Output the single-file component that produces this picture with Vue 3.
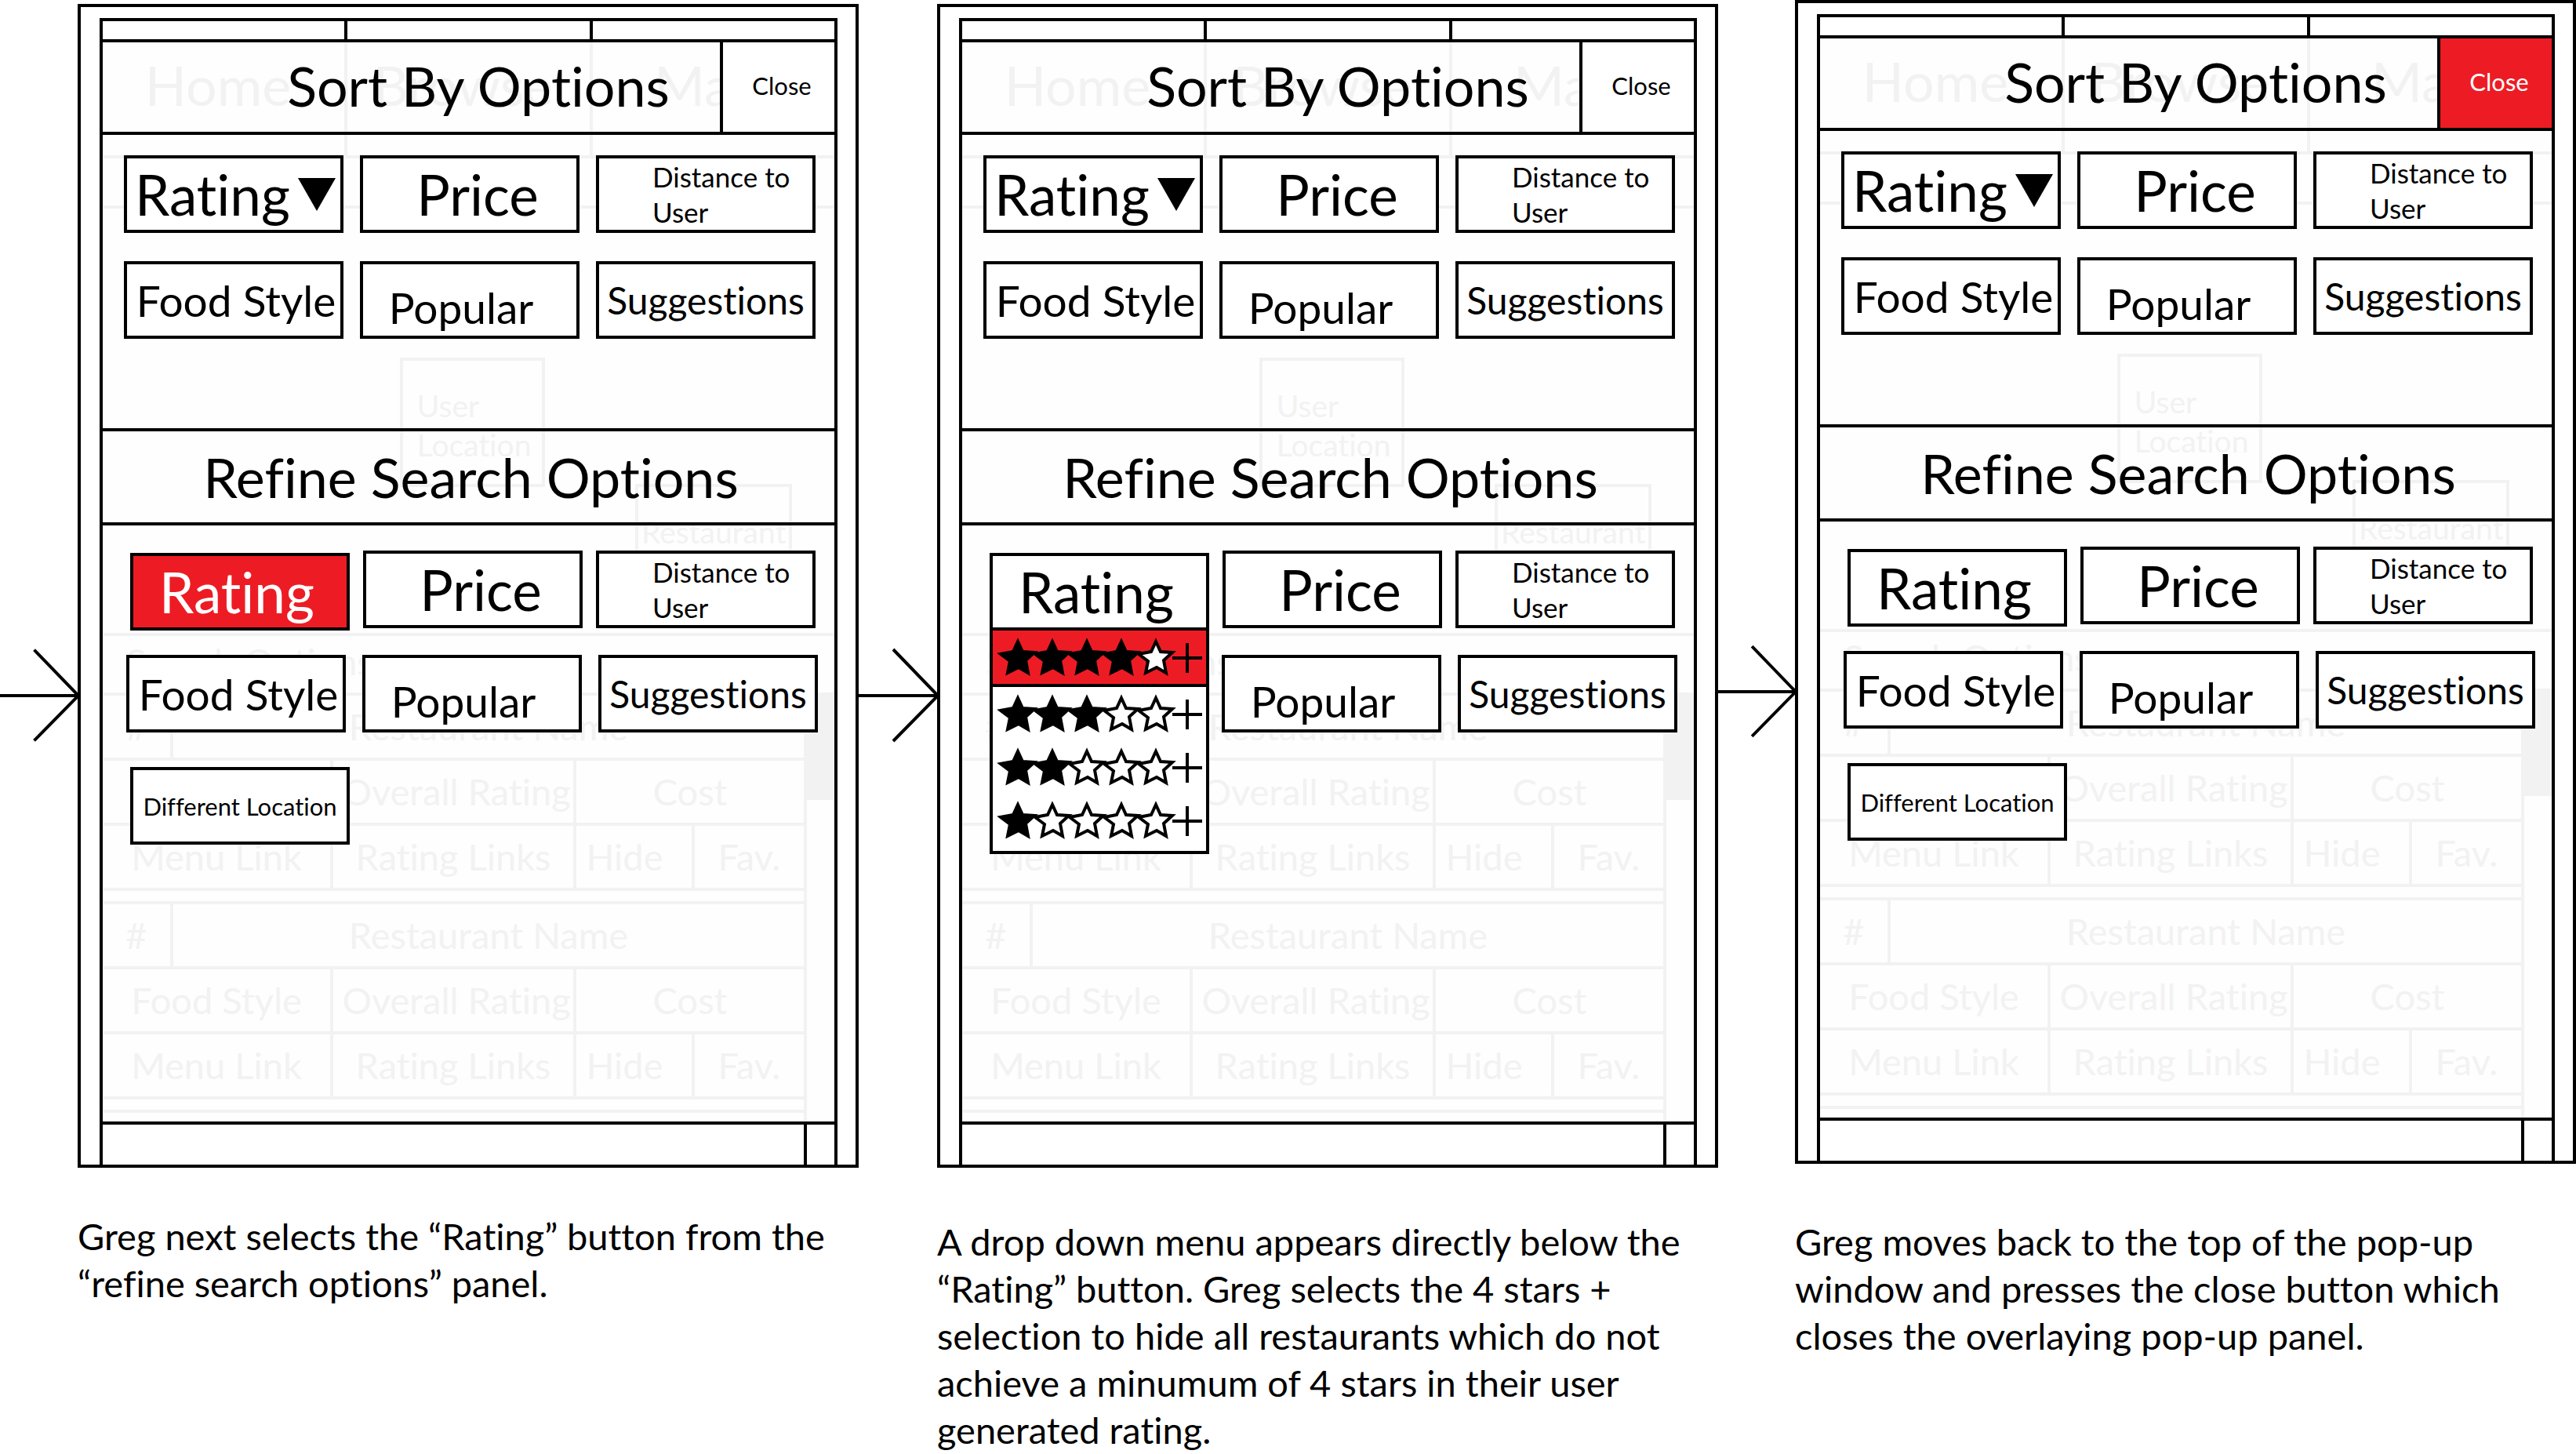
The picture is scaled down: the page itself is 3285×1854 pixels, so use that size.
<script setup>
const steps = [
  {
    id: 'select',
    caption: 'Greg next selects the “Rating” button from the “refine search options” panel.',
    active: 'rating',
  },
  {
    id: 'choose',
    caption:
      'A drop down menu appears directly below the “Rating” button. Greg selects the 4 stars + selection to hide all restaurants which do not achieve a minumum of 4 stars in their user generated rating.',
    active: 'four-stars',
    menuOpen: true,
  },
  {
    id: 'close',
    caption:
      'Greg moves back to the top of the pop-up window and presses the close button which closes the overlaying pop-up panel.',
    active: 'close',
  },
]

const starRows = [4, 3, 2, 1]
const starShape = '0,-21 6,-8 21,-7 10,3 13,19 1,12 -13,19 -10,4 -22,-5 -6,-8'
</script>

<template>
  <main class="storyboard">
    <article v-for="step in steps" :key="step.id" class="step" :class="step.id">
      <svg class="arrow" viewBox="0 0 100 120" preserveAspectRatio="xMaxYMid meet" aria-hidden="true">
        <path d="M0 60H101M44 1L101 60L44 118" />
      </svg>

      <section class="frame">
        <div class="window">
          <div class="tab-tops"><span></span><span></span><span></span></div>

          <div class="stage">
            <div class="screen">
              <nav class="tabs">
                <span>Home</span>
                <span>Browse</span>
                <span>Map</span>
              </nav>
              <div class="band"></div>
              <div class="map">
                <div class="pin user">User<br />Location</div>
                <div class="pin place">Restaurant</div>
              </div>
              <div class="search-bar">Search Options</div>
              <div class="results">
                <div class="list">
                  <div v-for="n in 2" :key="n" class="card">
                    <div class="line name"><span>#</span><span>Restaurant Name</span></div>
                    <div class="line facts">
                      <span>Food Style</span><span>Overall Rating</span><span>Cost</span>
                    </div>
                    <div class="line links">
                      <span>Menu Link</span><span>Rating Links</span><span class="hide">Hide</span><span>Fav.</span>
                    </div>
                  </div>
                  <div class="next-card"></div>
                </div>
                <div class="scrollbar"><div class="thumb"></div></div>
              </div>
            </div>

            <div class="popup">
              <header class="sort-head">
                <h2>Sort By Options</h2>
                <button class="close" :class="{ active: step.active === 'close' }">Close</button>
              </header>
              <div class="sort-body">
                <div class="row sort-row">
                  <button class="option large sorted">
                    Rating
                    <svg viewBox="0 0 48 42" width="48" height="42" aria-hidden="true">
                      <path d="M0 0H48L24 42Z" />
                    </svg>
                  </button>
                  <button class="option large price">Price</button>
                  <button class="option small distance">Distance to<br />User</button>
                </div>
                <div class="row sort-row">
                  <button class="option medium food">Food Style</button>
                  <button class="option medium popular">Popular</button>
                  <button class="option regular">Suggestions</button>
                </div>
              </div>

              <header class="refine-head"><h2>Refine Search Options</h2></header>
              <div class="refine-body">
                <div class="row refine-row first">
                  <div class="rating-field">
                    <button class="option large rating" :class="{ active: step.active === 'rating' }">Rating</button>
                    <ul v-if="step.menuOpen" class="menu">
                      <li v-for="count in starRows" :key="count">
                        <button
                          class="stars"
                          :class="{ chosen: count === 4 }"
                          :aria-label="`${count} stars or more`"
                        >
                          <svg viewBox="0 0 272 68" aria-hidden="true">
                            <polygon
                              v-for="i in 5"
                              :key="i"
                              :points="starShape"
                              :transform="`translate(${44 * i - 12} 35)`"
                              :class="{ filled: i <= count }"
                            />
                            <path d="M229 35H267M248 16V54" />
                          </svg>
                        </button>
                      </li>
                    </ul>
                  </div>
                  <button class="option large price">Price</button>
                  <button class="option small distance">Distance to<br />User</button>
                </div>
                <div class="row refine-row second">
                  <button v-if="!step.menuOpen" class="option medium food">Food Style</button>
                  <button class="option medium popular">Popular</button>
                  <button class="option regular last">Suggestions</button>
                </div>
                <div v-if="!step.menuOpen" class="row refine-row third">
                  <button class="option tiny">Different Location</button>
                </div>
              </div>
            </div>
          </div>

          <footer class="foot"><span></span><span></span></footer>
        </div>
      </section>

      <p class="caption">{{ step.caption }}</p>
    </article>
  </main>
</template>

<style>
body {
  margin: 0;
  background: #fff;
}
</style>

<style scoped>
.storyboard {
  display: grid;
  grid-template-columns: 1095fr 1096fr 1094fr;
  align-items: start;
  font-family: Lato, 'Open Sans', sans-serif;
  font-variant-ligatures: none;
  color: #000;
  --ink: #000;
  --faint: #f2f2f2;
  --red: #ed1c24;
}

.step {
  display: grid;
  grid-template-columns: 99px minmax(0, 1fr);
  align-items: start;
  padding-top: 5px;
}
.step.choose {
  grid-template-columns: 100px minmax(0, 1fr);
}
.step.close {
  grid-template-columns: 98px minmax(0, 1fr);
  padding-top: 0;
}

.arrow {
  width: 100%;
  height: 120px;
  margin-top: 822px;
  overflow: visible;
  fill: none;
  stroke: var(--ink);
  stroke-width: 4;
}

.caption {
  grid-column: 2;
  margin: 57px 0 0;
  font-size: 47px;
  line-height: 60px;
}
.choose .caption {
  margin-top: 64px;
}
.step.close .caption {
  margin-top: 69px;
}

/* Device frame */
.frame {
  border: 4px solid var(--ink);
  padding: 14px 23px 0 24px;
}
.window {
  border: 4px solid var(--ink);
  border-bottom: 0;
}
.tab-tops,
.tabs {
  display: grid;
  grid-template-columns: 308fr 313fr 312fr;
}
.tab-tops span {
  height: 23px;
}
.tab-tops span + span {
  border-left: 4px solid var(--ink);
}
.stage {
  display: grid;
  background: #fefefe;
}
.screen,
.popup {
  grid-area: 1 / 1;
  min-width: 0;
}
.popup {
  position: relative;
  z-index: 1;
}
.foot {
  display: grid;
  grid-template-columns: 1fr 39px;
  height: 51px;
  border-top: 4px solid var(--ink);
}
.foot span + span {
  border-left: 4px solid var(--ink);
}

/* Dimmed screen under the pop-up */
.screen {
  color: var(--faint);
  font-size: 47px;
  line-height: 60px;
}
.tabs {
  height: 148px;
  font-size: 70px;
  line-height: 116px;
  text-align: center;
}
.tabs span {
  padding-right: 14px;
}
.tabs span + span {
  border-left: 4px solid var(--faint);
}
.band {
  height: 60px;
  border-top: 4px solid var(--faint);
  border-bottom: 4px solid var(--faint);
}
.map {
  position: relative;
  height: 541px;
}
.pin {
  position: absolute;
  box-sizing: border-box;
  height: 165px;
  padding-top: 32px;
  border: 4px solid var(--faint);
  font-size: 39px;
  line-height: 50px;
}
.pin.user {
  left: 40.6%;
  top: 190px;
  width: 185px;
  padding-left: 18px;
}
.pin.place {
  left: 72.8%;
  top: 351px;
  width: 200px;
  text-align: center;
}
.search-bar {
  height: 72px;
  padding-left: 30px;
  border-top: 4px solid var(--faint);
  line-height: 64px;
}
.results {
  display: grid;
  grid-template-columns: 1fr 39px;
}
.list {
  padding-bottom: 11px;
}
.card {
  margin-bottom: 13px;
  border-bottom: 4px solid var(--faint);
}
.line {
  display: grid;
  height: 79px;
  border-top: 4px solid var(--faint);
  line-height: 78px;
  text-align: center;
  white-space: nowrap;
}
.line span + span {
  border-left: 4px solid var(--faint);
}
.name {
  grid-template-columns: 86px 1fr;
}
.facts {
  grid-template-columns: 290fr 310fr 294fr;
}
.links {
  grid-template-columns: 290fr 310fr 151fr 143fr;
}
.facts span:nth-child(2) {
  padding-left: 8px;
}
.links .hide {
  padding-right: 24px;
}
.next-card {
  border-top: 4px solid var(--faint);
}
.scrollbar {
  border-left: 4px solid var(--faint);
}
.thumb {
  height: 137px;
  background: var(--faint);
}

/* Pop-up */
h2 {
  margin: 0;
  font-size: 70px;
  font-weight: 400;
  line-height: 110px;
  text-align: center;
  white-space: nowrap;
}
button {
  margin: 0;
  font-family: inherit;
  font-variant-ligatures: inherit;
  color: inherit;
  cursor: pointer;
}
.sort-head {
  display: grid;
  grid-template-columns: 1fr 146px;
  height: 114px;
  border-top: 4px solid var(--ink);
  border-bottom: 4px solid var(--ink);
}
.sort-head h2 {
  padding-left: 171px;
}
.sort-head .close {
  padding: 0 0 5px 8px;
  border: 0;
  border-left: 4px solid var(--ink);
  background: #fff;
  font-size: 31px;
}
.refine-head {
  border-top: 4px solid var(--ink);
  border-bottom: 4px solid var(--ink);
}
.refine-head h2 {
  padding-left: 6px;
  line-height: 116px;
}
.sort-body {
  display: grid;
  align-content: start;
  gap: 36px;
  height: 348px;
  padding-top: 26px;
}
.refine-body {
  padding-top: 32px;
}
.row {
  display: grid;
  grid-template-columns: repeat(3, minmax(0, 1fr));
}
.sort-row {
  gap: 21px;
  padding: 0 24px 0 27px;
}
.first,
.third {
  gap: 17px;
  padding: 0 24px 0 35px;
}
.first {
  height: 102px;
}
.second {
  gap: 21px;
  margin-top: 31px;
  padding: 0 21px 0 30px;
}
.second .last {
  grid-column: 3;
}
.second .popular {
  grid-column: 2;
}
.third {
  margin-top: 44px;
}
.option {
  display: flex;
  align-items: center;
  justify-content: center;
  box-sizing: border-box;
  width: 100%;
  height: 99px;
  padding: 0;
  border: 4px solid var(--ink);
  background: #fff;
  white-space: nowrap;
}
.large {
  font-size: 71px;
}
.medium {
  font-size: 55px;
}
.regular {
  font-size: 48px;
}
.small {
  font-size: 35px;
  line-height: 45px;
}
.tiny {
  font-size: 31px;
}
.sorted {
  justify-content: space-between;
  padding: 0 6px 0 10px;
}
.price {
  padding-left: 20px;
}
.rating {
  padding-right: 8px;
}
.distance {
  justify-content: flex-start;
  padding-left: 68px;
  text-align: left;
}
.food {
  padding-left: 6px;
}
.popular {
  padding-top: 18px;
  padding-right: 22px;
}
.option.active,
.sort-head .close.active {
  background: var(--red);
  color: #fff;
}

/* Rating drop-down */
.rating-field {
  position: relative;
  align-self: end;
}
.menu {
  position: absolute;
  top: 100%;
  left: 0;
  right: 0;
  z-index: 1;
  margin: 0;
  padding: 0 0 5px;
  border: 4px solid var(--ink);
  border-top: 0;
  background: #fff;
  list-style: none;
}
.stars {
  display: block;
  width: 100%;
  padding: 0;
  border: 0;
  background: #fff;
}
.stars.chosen {
  border-bottom: 4px solid var(--ink);
  background: var(--red);
}
.stars svg {
  display: block;
  width: 100%;
  height: 68px;
  fill: #fff;
  stroke: var(--ink);
  stroke-width: 4;
}
.stars .filled {
  fill: var(--ink);
}
</style>
